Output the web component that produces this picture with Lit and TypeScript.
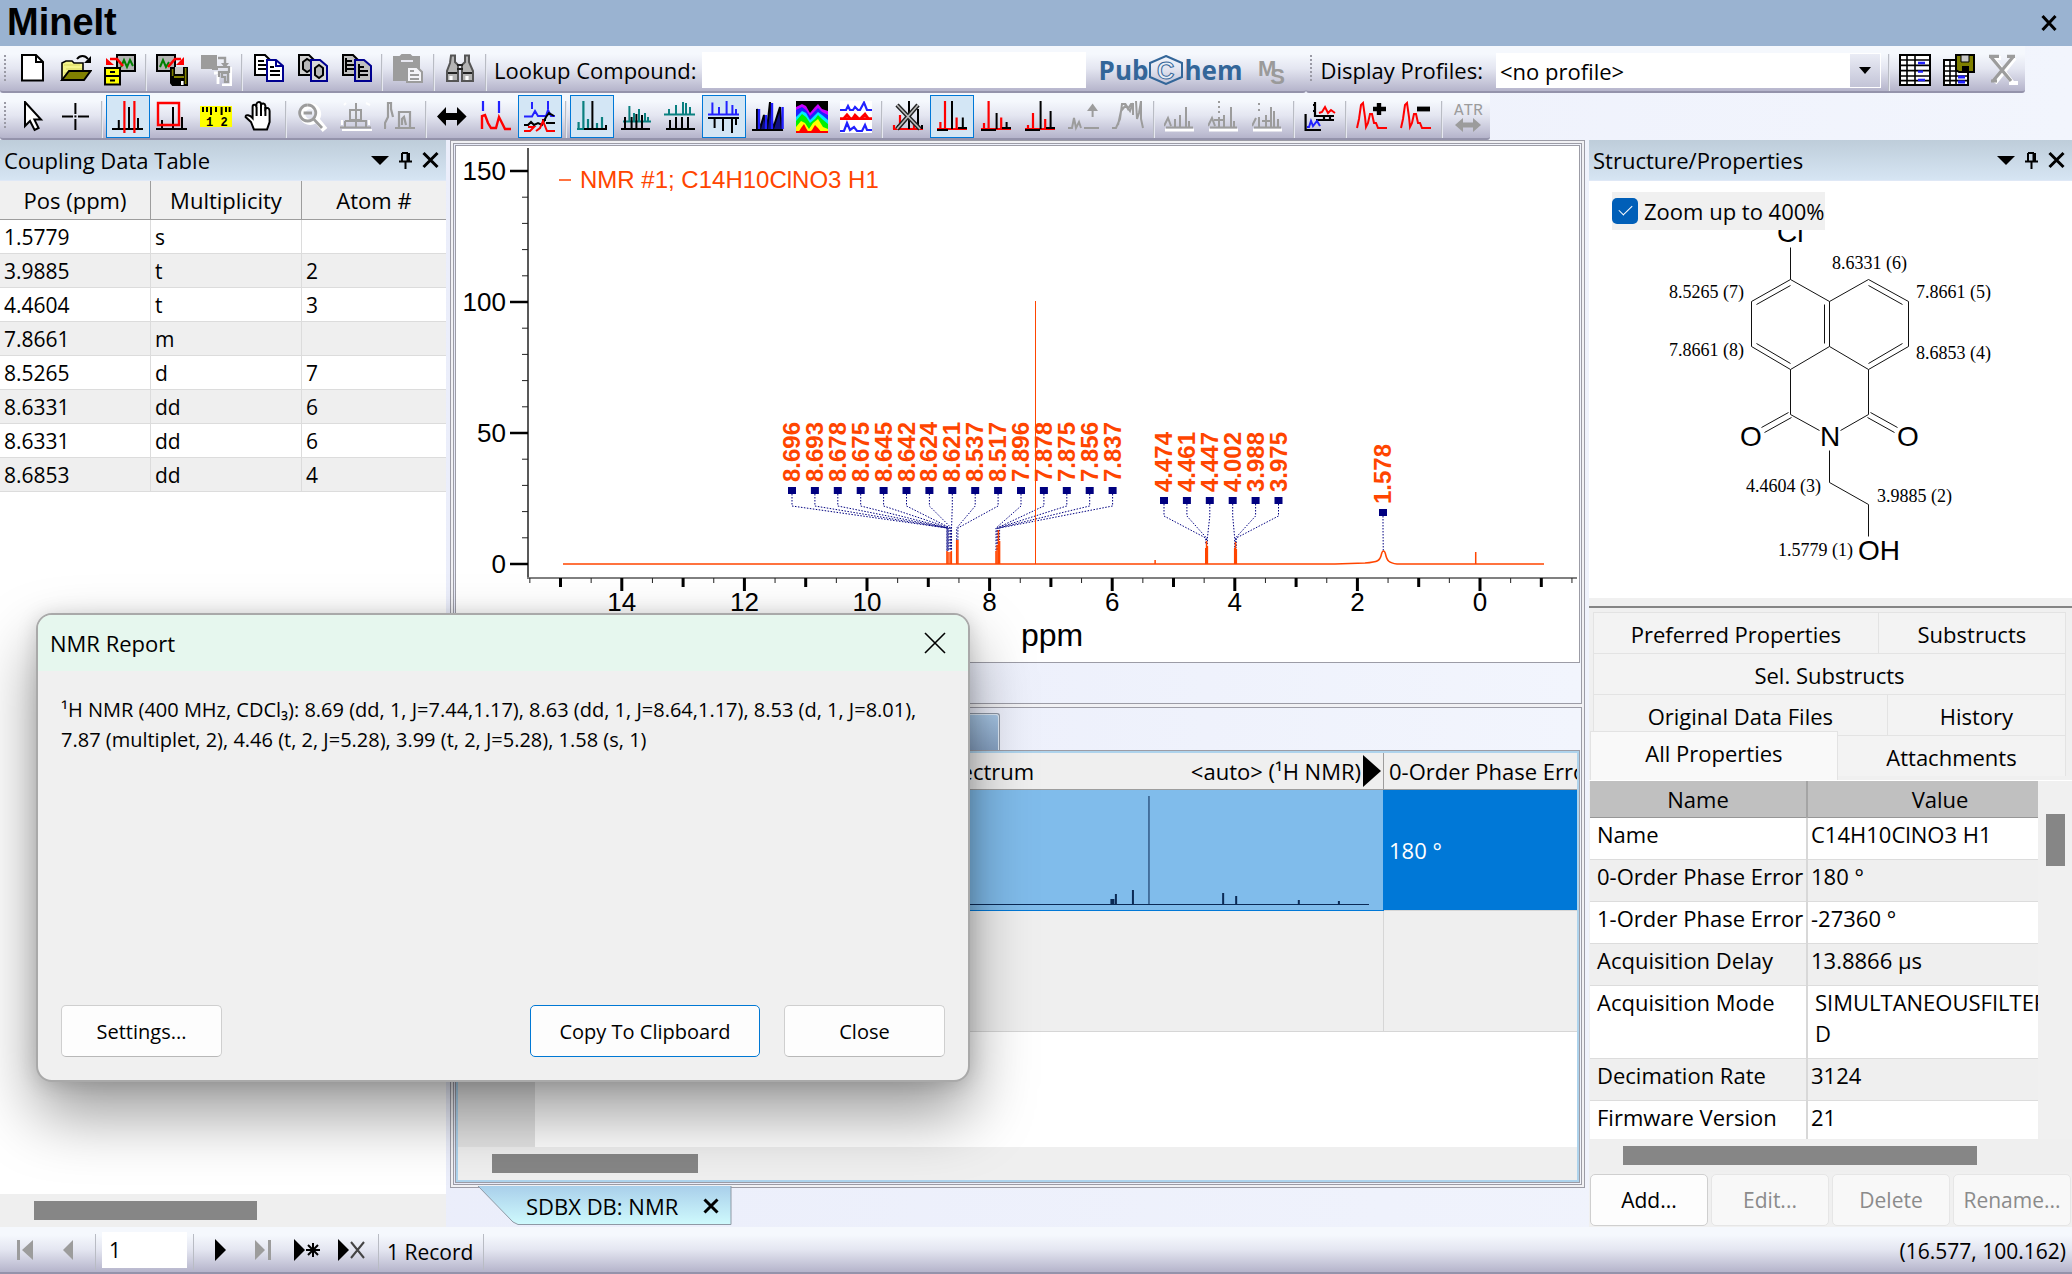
import { LitElement, html, css, svg, nothing } from "lit";
import { customElement } from "lit/decorators.js";
import { classMap } from "lit/directives/class-map.js";

type Part = [d: string, stroke: string, fill?: string, width?: number];

const K = "#000";
const R = "#f00";
const B = "#2222ff";
const T = "#0a8080";
const G = "#9c9c9c";
const W = "#fff";
const N = "none";
const NAVY = "#000090";

const drawParts = (parts: Part[]) =>
  parts.map(([d, s, f, w]) => svg`<path d=${d} stroke=${s} fill=${f ?? N} stroke-width=${w ?? 1}></path>`);

const doc = "M1.5 .5H6.5L9.5 3.5V10.5H1.5Z";
const doc2 = "M7.5 3H12L15.5 6V13.5H7.5Z";
const floppy: Part[] = [
  ["M7.500 7H15.500V15.700H8.500L7.500 14.500Z", K, K],
  ["M8.300 7.500V11M14.800 7V15", "#808000", N, 0.8],
  ["M9.500 6.500H13.500V10H9.500Z", N, "#c8c8c8"],
  ["M9 11.500H14", "#808000", N, 1],
  ["M12.500 13.500H13.800V15.500H12.500Z", N, W],
];
const peaksMinus: Part[] = [
  ["M.5 13.500L1.500 9L2.500 2L3.500 1L4.500 8L5 13L6 11L7 6.500L8 6.500L9 11L10 11L11 13.500H15.500", R, N, 1],
];

const ICONS: Record<string, Part[]> = {
  new: [["M3 .5H10L13.500 4V13.200H3Z", K, W], ["M10 .5V4H13.500", K]],
  open: [
    ["M1 13V4.500L3 3.500H6L7 4.500H11.500V8", K, "#f4f48a", 0.8],
    ["M2 5.500H10M3 7.500H11M2 9.500H4", "#d8d860", N, 0.6],
    ["M1 13L4.500 8.500H15.300L12 13Z", K, "#808000"],
    ["M8.500 2.500C10 .5 12.500 .5 14 2.500", K],
    ["M15.500 1V4.500H12Z", N, K],
  ],
  importDb: [
    ["M6.500 .5H15.500V8.500H6.500Z", K, "#b4b4b4"],
    ["M8.500 6.500L10 3L11.500 6.500L13 3L14.500 6", "#008000"],
    ["M9.500 6L6.500 2.500H3", R, N, 1.3],
    ["M1 2V5.500H5Z", N, R],
    ["M.5 7H8V15.300H.5Z", K, "#ff0"],
    ["M.5 11H8M3 9H5.500M3 13.200H5.500", K],
  ],
  exportDb: [
    ["M.5 .5H9.500V8.500H.5Z", K, "#b4b4b4"],
    ["M2 6.500L3.500 3L5 6.500L6.500 4", "#008000"],
    ["M6 6.500L9.500 2.500H12.500", R, N, 1.3],
    ["M14 1.500V5.500H10Z", N, R],
    ...floppy,
  ],
  exportOff: [
    ["M.5 .5H8.500V7.500H.5Z", N, G],
    ["M9 2H12.500V5", G, N, 1.2],
    ["M10.500 4.500H14.500L12.500 7Z", N, G],
    ["M7 9.500H9M15.500 6.500V15.500H11M9 15V10.500", W, N, 1.4],
    ["M6 7.500H9M8 6.500H14.500V9H9.500V11.500M11 9.500H14V14H12.500V11.500H11Z", G, N, 1.1],
  ],
  copy: [
    [doc, K, W], ["M3 3.500H6M3 5.500H7M3 7.500H7", K],
    [doc2, NAVY, W], ["M12 3V6H15.500", NAVY], ["M9 6.500H11M9 8.500H14M9 10.500H14", K],
  ],
  copyStructure: [
    [doc, K, "#d0d0d0"], ["M3.500 4L5.500 2.500L8 4V7.500L5.500 9L3.500 7.500Z", K, "#b8b8b8"],
    [doc2, NAVY, "#d8d8d8"], ["M9.500 7L11.500 5.500L13.500 7V10.500L11.500 12L9.500 10.500Z", K, "#b8b8b8"],
  ],
  copyRecord: [
    [doc, K, "#c0c0c0"], ["M3 2V9M3 3.500H6M3 5.500H8M3 7.500H8", K],
    [doc2, NAVY, "#c0c0c0"], ["M9.500 5V12M9.500 6.500H12M9.500 8.500H14M9.500 10.500H14", K],
  ],
  paste: [
    ["M1 1.500H4L5 .5H9L10 1.500H13.500V13H1Z", G, G],
    ["M4.500 3.500H10.500", "#e8e8f0"],
    ["M7.500 6.500H12.500L15 9V14H7.500Z", G, "#f4f4f8"],
    ["M9 8.500H11M9 10.500H13.500M9 12.500H13.500", G],
  ],
  find: [
    ["M3.500 .8H5.500V4L7 5.500V13.500H1.500V8.500L3 4.500ZM10.500 .8H12.500V4L14.500 8.500V13.500H9V5.500L10.500 4Z", "#555", "#b4b4b4"],
    ["M6.500 5.500H9.500M6.500 7.500H9.500M2 9.500H6.500M9.500 9.500H14", "#222"],
    ["M3.500 11V13M11.500 11V13", W, N, 1.6],
  ],
  profiles: [
    ["M.5 .5H15.500V15.500H.5Z", K, W],
    ["M.5 3H15.500M.5 5.700H15.500M.5 8.300H15.500M.5 11H15.500M.5 13.300H15.500M4 .5V15.500M8 .5V15.500", K, N, 0.8],
    ["M9.500 4.500H13M9.500 8.800H12M9.500 13H13", B, N, 1.2],
  ],
  saveProfile: [
    ["M.5 3H12.500V15.500H.5Z", K, W],
    ["M.5 6H12M.5 8.500H12M.5 11H12M.5 13.300H12M3.500 3V15.500M6.500 3V15.500", K, N, 0.8],
    ["M7.500 11.500H11M7.500 14H11", B, N, 1.4],
    ["M6.500 .5H15.500V9H8L6.500 8Z", K, "#808000"],
    ["M9 .5H13V4H9Z", K, "#c8c8c8", 0.5],
    ["M9.500 6H13V9H9.500Z", N, K],
  ],
  deleteProfile: [
    ["M3 2L13 14.500M14 2L4 14.500M2 2H7M11 14.500H15.500", W, N, 2],
    ["M2 1.500L12 13.500M13 1.500L3 13.500M1 1.200H6M10 1.200H14M2 13.500H5", G, N, 1.6],
  ],
  pointer: [["M4.500 .5V12.500L7 10L9.300 14.500L11.300 13.500L9.200 9.300H12.500Z", K, W]],
  cross: [["M1 7.700H6.500M9 7.700H14.500M7.700 1V6.500M7.700 9V14.500", K], ["M7.200 7.200H8.200V8.200H7.200Z", N, K]],
  peakLines: [
    ["M0 14H15.500M3.400 14V9.500M8.500 14V3M13 14V8.500", K],
    ["M6.200 0V16M11.200 0V16", R, N, 1.1],
  ],
  zoomBox: [
    ["M0 14H15.500M3 14V9.500M8.500 14V3M13 14V8", K],
    ["M1 1H11.500V12H1Z", R, N, 1.2],
  ],
  ruler: [
    ["M0 2.500H16V13H0Z", N, "#ff0"],
    ["M1.500 3V5.500M3.500 3V5.500M5.500 3V7M8 3V5.500M10.800 3V7M13 3V5.500M14.800 3V5.500", K],
  ],
  hand: [
    ["M5 14.300L3.500 10.500L.8 8C.8 6.500 3 7 4.300 8.500V3C4.300 1.500 6 1.500 6.200 3V1.500C6.700 .2 8.300 .2 8.500 1.500V2C9 .8 10.500 1 10.700 2.500V4C11.500 3 12.800 3.500 12.800 5V10.500L11.500 14.300Z", K, W],
    ["M6.300 3V7.500M8.500 2V7.500M10.700 3V7.500", K],
  ],
  zoomOut: [
    ["M7 2.500a4 4 0 1 0 .1 0M10 9L14.500 14.500", W, N, 3],
    ["M5.800 2a4 4 0 1 0 .1 0M3.800 6H8M9 9.200L13 13.500", G, N, 1.4],
  ],
  zoomPeaks: [
    ["M1 14.500H16M1 9.500V12M14.500 9.500V12M13 1L15 2M2 2L3 1", W],
    ["M0 13.200H15.500M2.500 13V10M5 4.500H10.500V9.500H5ZM8 1V13M2.500 10H13V13", G],
  ],
  zoomRegion: [["M.5 13.500V11L2 8V1H3.500V4L4.500 8M7.500 5.500H13V13.500H7.500ZM9 12V9L10 8L11 12M0 13.500H1M5.500 13.500H15.500", G, N, 1.1]],
  widen: [["M.5 7.800L5 3V6H10.500V3L15.300 7.800L10.500 12.500V9.500H5V12.500Z", N, K]],
  pick: [
    ["M1 14V7.500L2.500 7L4 11L5.500 13.500H8L9.500 8L11.500 12L12.500 14H15.500", R, N, 1.2],
    ["M1.500 0V5M9.500 0V6", B, N, 1.1],
  ],
  picksMulti: [
    ["M0 7.700H4L5.500 5L7 7.500H11L12 4.500L13.500 7.500H15.500M4 .5V4M12 0V4", B],
    ["M0 12H2L3.500 10.500L5 12L7 11L9 12L11 8L12.500 6L15 7.500M9 9.500H11M11 11H15.500", K],
    ["M0 15H3L5 13L2 13M6 15L8 13.500L9.500 10L11.500 15H15.500", R],
  ],
  overlay: [
    ["M.5 14H8M1.300 14V10.500M3.700 14V0M6 14V9M10.500 14V11M13 14V8", T, N, 1.1],
    ["M4 14H15.500M8.200 14V0M15 14V12", K],
  ],
  stagger: [
    ["M1.500 10.300H15.500M4.700 10V2.500M7 10V6M9.500 10V4M12.500 10V6M14 10V8", T],
    ["M.5 14H15M2.500 14V8M5.800 14V8M8.200 14V6.500M11 14V7", K],
  ],
  stack: [
    ["M0 6.700H15.500M2.500 6.500V4M6 6.500V2M9.500 6.500V.5M13 6.500V3M11 6.500V1", T],
    ["M1 14H15.500M3 14V9.500M6 14V8M9 14V8M12 14V8", K],
  ],
  mirror: [
    ["M0 6.700H15.500M2.200 6.500V.8M5.500 6.500V3M9.300 6.500V0M12.200 6.500V2M14 6.500V4", B],
    ["M0 8.500H15.500M3.300 8.500V13.500M7.500 8.500V15M12 8.500V16M14 8.500V12", K],
  ],
  solid: [
    ["M0 14.500H2.500V4L4 14L6 7L7.500 14L9 .5L10.500 14L14 3L15 14.500Z", K, "#101080"],
    ["M3.500 4V14M7 7V14M10 1V14M15.300 3V14", B, N, 1.2],
  ],
  heat: [
    ["M0 0H16V16H0Z", N, K],
    ["M0 16V3L3 1.500L5 2.500L7 6L9.500 3L11 1.500L13 4L16 5V16Z", N, "#c800ff"],
    ["M0 16V4.500L3 3L5 4.500L7 7.500L9.500 5L11 3.500L13 5.500L16 7V16Z", N, "#2020ff"],
    ["M0 16V8L3 5L5 6L7 9.500L9.500 7L11 5.500L13 7L16 9.500V16Z", N, "#00e8ff"],
    ["M0 16V10L3 6.500L5 8L7 11L9.500 9L11 7L13 9L16 11.500V16Z", N, "#00f000"],
    ["M0 16V13L2.500 10L4.500 11L6.500 14L8.500 11L11 9L13.500 13L16 14V16Z", N, "#ff0"],
    ["M1 16L2.500 13.500L4 11.500L5 13.500L6.500 16L8 14.500L9.500 12L11 13.500L13 16Z", N, R],
    ["M0 15.500H16", R],
  ],
  multi: [
    ["M0 0H16V16H0Z", N, W],
    ["M0 4.500H3L4 2.500L5 4.500H6.500L7.500 3L9 4.500H10L12 .8L13.500 4.500H16M0 15H2L3.500 11L5 14.500L7 13L8.500 15H11L12.500 12L13.500 14.500H16", B, N, 1.1],
    ["M0 8.800H16M2 8.500L3.500 6.800L5 8.500M6.500 8.500L7.500 7L9 8.500M10.500 8.500L12.500 6.500L14 8.500", R, N, 1.3],
  ],
  clearPeaks: [
    ["M.5 14H15.500M1 14V12M4 14V7M11 14V11", R, N, 1.1],
    ["M8.500 0V14M13 14V4M15 14V12M3 14V12", K],
    ["M2.500 2L14 14M13 2L2.500 14", "#222", N, 2.2],
    ["M2.500 2L14 14M13 2L2.500 14", "#bbb", N, 0.8],
  ],
  peaksTop: [
    ["M.5 14H15.500M2.200 14V10.500M4.500 14V0M10.300 14V8.300", R, N, 1.1],
    ["M8 14V0M13.400 14V8.300M.5 14.500H6M11 13.500H15.500", K],
  ],
  peaksStep: [
    ["M.5 14H15.500M2 14V11M4.300 14V0M10.600 14V8.300", R, N, 1.1],
    ["M8.300 14V6M13.300 14V10.500M.5 14.500H8M11 13.500H15.500", K],
  ],
  peaksStepBack: [
    ["M.5 14H15.500M4.500 14V6M2 14V12M10.600 14V9", R, N, 1.1],
    ["M8.300 14V0M13.300 14V5M.5 14.500H8M11 13.500H15.500", K],
  ],
  raise: [["M0 13.500H2L3 8.500L4 13.500L5.500 10.500L6.500 13.500M8 13.500H15.500M12.300 8V3", G], ["M12.300 1.200L9.500 5H15Z", N, G]],
  noise: [["M0 13.500H2L4 9L5 1.500H6.500L8 4L9.500 1.500H10.500V7M12 0L12.500 9L13.500 6L14.500 0V9L15.500 13.500M3 12L4.500 5L7 2L9 5L10.500 1", G]],
  greyPeaksA: [["M.5 14.500H15", W, N, 1.5], ["M0 12.500L2 8.500L3.500 12.500M5.500 13V9M8 13V7M11 13V3M12.500 13V10M1 13.200H14.500", G]],
  greyPeaksB: [["M.5 14.500H15", W, N, 1.5], ["M0 12.500L2 8.500L3.500 12.500M5.500 13V8M5.500 6V5M5.500 3.500V2.500M5.500 1V0M8 13V7M11.500 13V3M13 13V10M1 13.200H14.500M3 9.500H8", G]],
  greyPeaksC: [["M.5 14.500H15", W, N, 1.5], ["M0 12.500L2 8.500M3.500 13V8M3.500 5V4M3.500 2V1M7 13V7M9.500 13V3M11 13V5M13 13V9M1 13.200H14.500M5 10H10", G]],
  axes: [
    ["M.8 6.500V14.500H8.500M5.500 .5V7.500H15M6 9.500H15M10 7.500V9.500M13 7.500V9.500M5.500 2H4.500M5.500 5H4.500", K, N, 1.1],
    ["M1.500 13H2.500L3.500 10L4.500 12.500L6.500 10L8 12.500", B],
    ["M7.500 6L9 5.500L10.500 3L12 6L13.500 4.500L15.500 6", R],
  ],
  addPeak: [...peaksMinus, ["M11.500 1V7M8.500 4H15", K, N, 2.2]],
  removePeak: [...peaksMinus, ["M8.500 4H15", K, N, 2.4]],
  atr: [["M1.500 12L5.500 8.500V10.700H10.500V8.500L14.500 12L10.500 15.500V13.300H5.500V15.500Z", N, G]],
};

interface Tool { icon: string; label: string; on?: boolean; off?: boolean }
type ToolItem = Tool | "|";

const FILE_TOOLS: ToolItem[] = [
  { icon: "new", label: "New" },
  { icon: "open", label: "Open" },
  { icon: "importDb", label: "Open database" },
  "|",
  { icon: "exportDb", label: "Save to database" },
  { icon: "exportOff", label: "Update record", off: true },
  "|",
  { icon: "copy", label: "Copy" },
  { icon: "copyStructure", label: "Copy structure" },
  { icon: "copyRecord", label: "Copy record" },
  "|",
  { icon: "paste", label: "Paste", off: true },
  "|",
  { icon: "find", label: "Find" },
  "|",
];

const PROFILE_TOOLS: ToolItem[] = [
  "|",
  { icon: "profiles", label: "Edit profiles" },
  { icon: "saveProfile", label: "Save profile" },
  { icon: "deleteProfile", label: "Delete profile", off: true },
];

const VIEW_TOOLS: ToolItem[] = [
  { icon: "pointer", label: "Select" },
  { icon: "cross", label: "Crosshair" },
  "|",
  { icon: "peakLines", label: "Zoom horizontally", on: true },
  { icon: "zoomBox", label: "Zoom box" },
  { icon: "ruler", label: "Ruler" },
  { icon: "hand", label: "Pan" },
  "|",
  { icon: "zoomOut", label: "Zoom out", off: true },
  { icon: "zoomPeaks", label: "Full view", off: true },
  { icon: "zoomRegion", label: "Zoom region", off: true },
  "|",
  { icon: "widen", label: "Fit width" },
  { icon: "pick", label: "Pick peaks" },
  { icon: "picksMulti", label: "Pick in all", on: true },
  "|",
  { icon: "overlay", label: "Overlay", on: true },
  { icon: "stagger", label: "Stagger" },
  { icon: "stack", label: "Stack" },
  { icon: "mirror", label: "Mirror", on: true },
  { icon: "solid", label: "Solid" },
  { icon: "heat", label: "Heat map" },
  { icon: "multi", label: "Multiple" },
  "|",
  { icon: "clearPeaks", label: "Clear normalization" },
  { icon: "peaksTop", label: "Normalize to top", on: true },
  { icon: "peaksStep", label: "Normalize first" },
  { icon: "peaksStepBack", label: "Normalize second" },
  { icon: "raise", label: "Offset", off: true },
  { icon: "noise", label: "Noise", off: true },
  "|",
  { icon: "greyPeaksA", label: "Baseline", off: true },
  { icon: "greyPeaksB", label: "Baseline point", off: true },
  { icon: "greyPeaksC", label: "Baseline range", off: true },
  "|",
  { icon: "axes", label: "Axes" },
  "|",
  { icon: "addPeak", label: "Add peak" },
  { icon: "removePeak", label: "Remove peak" },
  "|",
  { icon: "atr", label: "ATR", off: true },
];

const COUPLING = [
  ["1.5779", "s", ""],
  ["3.9885", "t", "2"],
  ["4.4604", "t", "3"],
  ["7.8661", "m", ""],
  ["8.5265", "d", "7"],
  ["8.6331", "dd", "6"],
  ["8.6331", "dd", "6"],
  ["8.6853", "dd", "4"],
];

const PROPERTIES: [string, string[]][] = [
  ["Name", ["C14H10ClNO3 H1"]],
  ["0-Order Phase Error", ["180 °"]],
  ["1-Order Phase Error", ["-27360 °"]],
  ["Acquisition Delay", ["13.8866 µs"]],
  ["Acquisition Mode", ["SIMULTANEOUSFILTERE", "D"]],
  ["Decimation Rate", ["3124"]],
  ["Firmware Version", ["21"]],
];

/* Chart scale: one ppm is 61.3 units, fifty intensity units are 131. */
const px = (ppm: number) => 1480 - 61.3 * ppm;
const py = (v: number) => 564 - 2.62 * v;

interface PeakGroup { labels: string[]; x: number; top: number; join: number; ends: number[] }
const GROUPS: PeakGroup[] = [
  {
    labels: ["8.696", "8.693", "8.678", "8.675", "8.645", "8.642", "8.624", "8.621", "8.537", "8.517", "7.896", "7.878", "7.875", "7.856", "7.837"],
    x: 792, top: 487, join: 528,
    ends: [551, 551, 551, 551, 551, 551, 551, 551, 540, 540, 551, 551, 551, 540, 540],
  },
  { labels: ["4.474", "4.461", "4.447", "4.002", "3.988", "3.975"], x: 1164, top: 497, join: 538, ends: [544, 544, 544, 548, 548, 548] },
  { labels: ["1.578"], x: 1383, top: 509, join: 551, ends: [551] },
];

const PEAKS: [number, number][] = [
  [8.696, 551], [8.678, 552], [8.645, 552], [8.624, 551], [8.537, 540], [8.517, 540],
  [7.896, 551], [7.878, 545], [7.856, 530], [7.837, 541], [4.474, 548], [4.461, 541], [4.447, 546],
  [4.002, 548], [3.988, 542], [3.975, 549], [0.07, 552], [5.3, 560],
];

@customElement("tool-strip")
export class ToolStrip extends LitElement {
  static properties = { items: { attribute: false } };
  declare items: ToolItem[];
  static styles = css`
    :host { display: flex; height: 44px; }
    .tool {
      width: 44px; height: 43px; padding: 0; border: 1px solid transparent; background: none;
      display: flex; align-items: center; justify-content: center;
    }
    .tool.on { border-color: #0078d7; background: #d3e6f5; }
    .sep { width: 8px; display: flex; justify-content: center; padding-top: 6px; box-sizing: border-box; }
    .sep::before { content: ""; border-left: 1px solid #b9bcc4; border-right: 1px solid #e6e8f0; height: 37px; }
    .icon { width: 32px; height: 32px; display: block; }
    .atr { font: 8px "Liberation Mono", monospace; }
    .digits { font: 700 6px "Liberation Mono", monospace; white-space: pre; }
  `;
  render() {
    return (this.items ?? []).map((t) =>
      t === "|"
        ? html`<span class="sep"></span>`
        : html`<button class=${classMap({ tool: true, on: !!t.on })} ?disabled=${!!t.off} aria-label=${t.label}>
            <svg class="icon" viewBox="0 0 16 16">
              ${drawParts(ICONS[t.icon])}
              ${t.icon === "atr" ? svg`<text class="atr" x="1" y="7" fill=${G}>ATR</text>` : nothing}
              ${t.icon === "ruler" ? svg`<text class="digits" x="3" y="12.500">1 2</text>` : nothing}
            </svg>
          </button>`
    );
  }
}

@customElement("panel-title")
export class PanelTitle extends LitElement {
  static properties = { heading: {} };
  declare heading: string;
  static styles = css`
    :host {
      display: flex; align-items: center; height: 41px; padding: 0 7px 0 4px; box-sizing: border-box;
      background: linear-gradient(#becdda, #d6e5f3); border-bottom: 1px solid #dfe8f6;
      font: 22px "Open Sans", sans-serif;
    }
    .name { flex: 1; font: inherit; margin: 0; }
    .act { border: 0; padding: 0; background: none; display: flex; margin-left: 9px; }
  `;
  render() {
    return html`
      <h2 class="name">${this.heading}</h2>
      <button class="act" aria-label="Menu"><svg width="18" height="18" viewBox="0 0 18 18"><path d="M0 5H18L9 14Z"></path></svg></button>
      <button class="act" aria-label="Pin">
        <svg width="15" height="18" viewBox="0 0 15 18"><path d="M4 2V10M4 2H10M9.500 2V10M11 2V10M1 10.500H14M7.500 11V18" fill="none" stroke="#000" stroke-width="2"></path></svg>
      </button>
      <button class="act" aria-label="Close">
        <svg width="17" height="18" viewBox="0 0 17 18"><path d="M1.500 2L15.500 16M15.500 2L1.500 16" stroke="#000" stroke-width="3"></path></svg>
      </button>`;
  }
}

@customElement("nmr-chart")
export class NmrChart extends LitElement {
  static styles = css`
    :host { display: block; background: #fff; }
    svg { display: block; width: 100%; height: auto; font-family: "Liberation Sans", Arial, sans-serif; }
    .tick { font-size: 26px; }
    .unit { font-size: 32px; }
    .legend { font-size: 24px; fill: #ff4500; }
    .peak { font-size: 24px; font-weight: 700; fill: #ff4500; }
  `;
  render() {
    const yMinor = Array.from({ length: 16 }, (_, i) => i * 10);
    const xTicks = Array.from({ length: 35 }, (_, i) => 15.5 - i * 0.5);
    return html`<svg viewBox="457 147 1121 515" role="img" aria-label="NMR spectrum">
      <path d="M528 148V578" stroke="#222" stroke-width="1.500"></path>
      <path d="M527 578H1577" stroke="#808080" stroke-width="2"></path>
      ${yMinor.map((v) => v % 50 === 0
        ? svg`<path d="M510 ${py(v)}H528" stroke="#000" stroke-width="2.500"></path><text class="tick" text-anchor="end" x="506" y=${py(v) + 9}>${v}</text>`
        : svg`<path d="M522 ${py(v)}H528" stroke="#222"></path>`)}
      ${xTicks.map((p) => p % 1 !== 0
        ? svg`<path d="M${px(p)} 578V583" stroke="#222"></path>`
        : p % 2 !== 0
          ? svg`<path d="M${px(p)} 578V587" stroke="#000" stroke-width="3"></path>`
          : svg`<path d="M${px(p)} 578V591" stroke="#000" stroke-width="3"></path><text class="tick" text-anchor="middle" x=${px(p)} y="611">${p}</text>`)}
      <text class="unit" text-anchor="middle" x="1052" y="646">ppm</text>
      <path d="M559 180H571" stroke="#ff4500" stroke-width="1.500"></path>
      <text class="legend" x="580" y="188">NMR #1; C14H10ClNO3 H1</text>
      ${GROUPS.map((g) => g.labels.map((l, i) => {
        const x = g.x + i * 22.9;
        const end = px(Number(l));
        return svg`
          <text class="peak" transform="translate(${x + 8} ${g.top - 5}) rotate(-90)">${l}</text>
          <rect x=${x - 4} y=${g.top} width="8" height="7" fill="#000080"></rect>
          <path d="M${x} ${g.top + 7}V${g.top + 19}L${end} ${g.join}V${g.ends[i]}" fill="none" stroke="#000080" stroke-dasharray="1.500 1.500"></path>`;
      }))}
      <g fill="none" stroke="#ff4500" stroke-width="1.500">
        <path d="M563 564H1335L1365 563C1378 562 1380 561 1381.500 554C1382.500 550 1384.500 550 1385.500 554C1387 561 1389 563 1397 564H1544"></path>
        <path d="M1035.500 301V564" stroke-width="1"></path>
        ${PEAKS.map(([p, y]) => svg`<path d="M${px(p)} 564V${y}"></path>`)}
      </g>
    </svg>`;
  }
}

@customElement("molecule-view")
export class MoleculeView extends LitElement {
  static styles = css`
    :host { display: block; position: relative; background: #fff; }
    svg { display: block; width: 100%; height: auto; }
    .bond { fill: none; stroke: #111; }
    .atom { font: 28px "Liberation Sans", Arial, sans-serif; }
    .shift { font: 18px "Liberation Serif", "Times New Roman", serif; }
    .zoom {
      position: absolute; left: 23px; top: 11px; height: 38px; display: flex; align-items: center; gap: 6px;
      background: #f0f0f0; font: 22px "Open Sans", sans-serif;
    }
    .check {
      appearance: none; margin: 0; width: 26px; height: 26px; border-radius: 5px; background: #005fb8;
      display: grid; place-items: center;
    }
    .check:checked::before {
      content: ""; width: 12px; height: 6px; border-left: 1px solid #fff; border-bottom: 1px solid #fff;
      transform: rotate(-45deg); margin-bottom: 5px;
    }
  `;
  render() {
    const shifts: [number, number, string][] = [
      [252, 89, "8.6331 (6)"], [89, 118, "8.5265 (7)"], [336, 118, "7.8661 (5)"], [89, 176, "7.8661 (8)"],
      [336, 179, "8.6853 (4)"], [166, 312, "4.4604 (3)"], [297, 322, "3.9885 (2)"], [198, 376, "1.5779 (1)"],
    ];
    const atoms: [number, number, string][] = [
      [197, 62, "Cl"], [160, 266, "O"], [240, 266, "N"], [317, 266, "O"], [278, 380, "OH"],
    ];
    return html`
      <svg viewBox="9 1 483 417" role="img" aria-label="Structure">
        <path class="bond" transform="translate(-.5 .5)" d="M211 67V99L250 121V166L211 189L172 166V121L211 99M250 121L289 99L329 121V166L289 189L250 166M211 189V234L240 250M289 189V234L261 250
          M177 124L211 105M245 124V163M177 163L211 183M289 105L323 124M289 183L323 163
          M209 232L182 247M212 237L185 252M291 232L318 247M288 237L315 252M250 270V302L289 324V356"></path>
        ${atoms.map(([x, y, t]) => svg`<text class="atom" x=${x} y=${y}>${t}</text>`)}
        ${shifts.map(([x, y, t]) => svg`<text class="shift" x=${x} y=${y}>${t}</text>`)}
      </svg>
      <label class="zoom"><input class="check" type="checkbox" checked />Zoom up to 400%</label>`;
  }
}

@customElement("nmr-report")
export class NmrReport extends LitElement {
  static styles = css`
    :host {
      display: flex; flex-direction: column; box-sizing: border-box; border: 2px solid #a9a9a9; border-radius: 16px;
      overflow: hidden; background: #f0f0f0; box-shadow: 0 32px 64px rgba(0, 0, 0, 0.4), 0 2px 20px rgba(0, 0, 0, 0.15);
      font: 22px "Open Sans", sans-serif;
    }
    .bar { display: flex; align-items: center; height: 56px; padding: 0 22px 0 12px; background: #e6f7ee; }
    .name { flex: 1; margin: 0; font: inherit; }
    .x { border: 0; background: none; padding: 0; display: flex; }
    .text { flex: 1; margin: 0; padding: 24px 16px 24px 23px; font-size: 20px; line-height: 30px; }
    .foot { display: flex; gap: 24px; padding: 0 23px 23px; }
    .btn {
      height: 52px; width: 161px; border: 1px solid #cfcfcf; border-bottom-color: #b8b8b8; border-radius: 5px; background: #fdfdfd;
      font: 20px "Open Sans", sans-serif; padding: 0; color: #000;
    }
    .copy { width: 230px; border-color: #0078d4; margin-left: auto; }
  `;
  render() {
    return html`
      <header class="bar">
        <h2 class="name">NMR Report</h2>
        <button class="x" aria-label="Close"><svg width="22" height="22" viewBox="0 0 22 22"><path d="M1 1L21 21M21 1L1 21" stroke="#000" stroke-width="1.600"></path></svg></button>
      </header>
      <p class="text">¹H NMR (400 MHz, CDCl₃): 8.69 (dd, 1, J=7.44,1.17), 8.63 (dd, 1, J=8.64,1.17), 8.53 (d, 1, J=8.01), 7.87 (multiplet, 2), 4.46 (t, 2, J=5.28), 3.99 (t, 2, J=5.28), 1.58 (s, 1)</p>
      <footer class="foot">
        <button class="btn">Settings...</button>
        <button class="btn copy">Copy To Clipboard</button>
        <button class="btn">Close</button>
      </footer>`;
  }
}

@customElement("app-root")
export class AppRoot extends LitElement {
  static styles = css`
    :host {
      display: flex; flex-direction: column; min-height: 100vh; position: relative; overflow: hidden;
      font: 21px "Open Sans", "Noto Sans", sans-serif; color: #000;
      background: linear-gradient(90deg, #e9ecfa, #f2f5fd);
    }
    .title { display: flex; align-items: center; justify-content: space-between; height: 46px; padding: 0 15px 0 7px; background: #9ab3d1; }
    .brand { margin: 0; font: 700 38px/42px "Liberation Sans", Arial, sans-serif; padding-bottom: 2px; }
    .plain { border: 0; padding: 0; background: none; display: flex; }
    .row { display: flex; height: 47px; }
    .strip {
      display: flex; align-items: flex-start; box-sizing: border-box; padding-top: 2px; border-bottom: 2px solid #9493ab;
      background: linear-gradient(#f5f8fd 0 18%, #e4e6f1 50%, #b5b4cb); border-radius: 0 0 3px 3px;
    }
    .grip { width: 2px; height: 28px; margin: 7px 4px 0; background: repeating-linear-gradient(#9a9aa5 0 2px, transparent 2px 4px); }
    .caption { font-size: 22px; line-height: 44px; padding: 0 0 0 4px; white-space: nowrap; }
    .lookup { width: 384px; height: 36px; margin: 4px 0 0 5px; border: 0; padding: 0 6px; box-sizing: border-box; background: #fff; font: inherit; }
    .logo { display: flex; align-items: center; height: 43px; margin: 0 16px 0 13px; color: #336699; font: 700 26px "Open Sans", sans-serif; }
    .hex { font: 700 24px "Liberation Sans", Arial, sans-serif; }
    .ms { margin: 8px 20px 0 0; overflow: visible; }
    .mst { font: 700 22px "Liberation Sans", Arial, sans-serif; }
    .combo { position: relative; margin: 5px 4px 0 13px; width: 385px; height: 35px; display: flex; }
    .select {
      appearance: none; width: 100%; border: 0; border-radius: 0; padding: 0 4px; background: #fff; color: #000;
      font: 22px "Open Sans", sans-serif;
    }
    .drop { position: absolute; right: 1px; top: 1px; bottom: 1px; width: 30px; display: grid; place-items: center; background: linear-gradient(#eaecf5, #c3c4d7); pointer-events: none; }

    .main { flex: 1; display: grid; grid-template-columns: 446px minmax(0, 1fr) 483px; }
    .dock { display: flex; flex-direction: column; background: #fff; min-width: 0; }
    .coupling { width: 100%; border-collapse: collapse; table-layout: fixed; font-size: 21px; }
    .coupling th { font-weight: 400; font-size: 22px; height: 38px; padding: 0; background: #f0f0f0; border-bottom: 1px solid #9d9d9d; border-right: 1px solid #9d9d9d; }
    .coupling td { height: 31px; padding: 2px 4px 0; line-height: 31px; border-bottom: 1px solid #dcdcdc; border-right: 1px solid #dcdcdc; }
    .coupling th:last-child, .coupling td:last-child { border-right: 0; }
    .coupling tr:nth-child(even) td { background: #efefef; }
    .pos { width: 150px; }
    .mult { width: 150px; }
    .spacer { flex: 1; }
    .track { display: flex; align-items: center; background: #efefef; height: 33px; }
    .thumb { height: 19px; background: #868686; }
    .thumb.left { width: 223px; margin-left: 34px; }
    .thumb.mid { width: 206px; margin-left: 34px; }
    .thumb.right { width: 354px; margin-left: 34px; }

    .center { display: flex; flex-direction: column; padding: 0 4px; min-width: 0; }
    .frame { flex: 1; display: flex; flex-direction: column; gap: 3px; border: 1px solid #9c9ca6; padding: 2px; background: #f1f1f4; }
    .pane { border: 1px solid #9c9ca6; padding: 1px; display: flex; flex-direction: column; background: linear-gradient(90deg, #e9ecfa, #f2f5fd); }
    .pane.chart { padding-bottom: 40px; }
    .pane.grid { flex: 1; }
    .well { border: 1px solid #9c9ca6; padding: 1px 1px 0; background: #fff; }
    .viewtabs { display: flex; align-items: flex-end; height: 41px; padding-left: 329px; }
    .viewtab { width: 216px; height: 37px; box-sizing: border-box; border: 1px solid #8f98a6; border-bottom: 0; border-radius: 3px 3px 0 0; background: linear-gradient(#a9c9e8, #88a3c4); padding: 0; box-shadow: inset -1px 1px #dfeaf6; }
    .sheet { flex: 1; display: flex; flex-direction: column; border: 1px solid #9c9ca6; background: #fff; outline: 2px solid #aed3ec; outline-offset: -3px; padding: 2px; }
    .body { flex: 1; background: linear-gradient(90deg, #e4e4e4 77px, #fff 77px); }
    .records { width: 100%; border-collapse: collapse; table-layout: fixed; font-size: 22px; }
    .records th { font-weight: 400; height: 36px; padding: 0; background: #efefef; border-bottom: 1px solid #9d9d9d; border-right: 1px solid #9d9d9d; text-align: left; white-space: nowrap; overflow: hidden; }
    .records td { height: 120px; padding: 0; background: #efefef; border-bottom: 1px solid #d6d6d6; border-right: 1px solid #d6d6d6; }
    .records th:last-child, .records td:last-child { padding-left: 5px; border-right: 0; }
    .records .picked { background: #0078d7; color: #fff; }
    .records .dither { background: repeating-conic-gradient(#0078d7 0 25%, #fff 0 50%) 0 0 / 2px 2px; border-color: #0078d7; }
    .rowhead { width: 77px; }
    .hidden { width: auto; }
    .spec { width: 448px; }
    .last { width: 188px; }
    .head { display: flex; align-items: center; padding: 0 2px 0 0; }
    .nuc { margin-left: auto; }
    .thumbnail { display: block; width: 100%; height: 120px; }
    .docs { display: flex; height: 39px; padding-left: 27px; align-items: flex-start; }
    .doc { position: relative; display: flex; align-items: center; justify-content: space-between; width: 255px; height: 39px; box-sizing: border-box; padding: 0 13px 0 49px; margin-top: -2px; }
    .docbg { position: absolute; inset: 0; width: 100%; height: 100%; }
    .doc a { position: relative; color: #000; text-decoration: none; font-size: 22px; }
    .doc button { position: relative; }

    .props { flex: 1; display: flex; flex-direction: column; background: #f0f0f0; }
    .splitter { height: 8px; border-bottom: 2px solid #858585; }
    .tabs { padding: 4px 6px 0 4px; }
    .tabrow { display: flex; height: 41px; }
    .tabrow.front { height: 45px; }
    .tab { flex: 1 1 auto; height: 41px; box-sizing: border-box; border: 1px solid #e3e3e3; border-width: 1px 1px 0 0; background: #f3f3f3; font: 22px "Open Sans", sans-serif; padding: 1px 0 0; color: #000; }
    .tab:first-child { border-left-width: 1px; }
    .tab.a { flex: 285 1 0; }
    .tab.b { flex: 187 1 0; }
    .tab.c { flex: 294 1 0; }
    .tab.d { flex: 178 1 0; }
    .tab.sel { flex: 247 1 0; height: 49px; margin: -4px 0 0 -3px; padding-bottom: 8px; background: #f9f9f9; z-index: 1; }
    .tab.e { flex: 228 1 0; }
    .list { display: flex; flex: 1; padding-left: 1px; border-top: 1px solid #fff; }
    .clip { flex: 1; min-width: 0; overflow: hidden; background: #fff; }
    .properties { width: 100%; border-collapse: collapse; table-layout: fixed; font-size: 22px; }
    .properties th { height: 36px; padding: 0; font-weight: 400; background: #c0c0c0; border-bottom: 1px solid #979797; }
    .properties th:first-child { border-right: 2px solid #a4a4a4; }
    .properties th:last-child { padding-left: 34px; }
    .properties td { height: 40px; padding: 1px 0 0 7px; border-bottom: 1px solid #dcdcdc; line-height: 31px; vertical-align: top; white-space: nowrap; overflow: hidden; }
    .properties td:first-child { border-right: 2px solid #d8d8d8; }
    .properties td:last-child { padding-left: 3px; }
    .properties .two { height: 71px; }
    .properties .two:last-child { padding-left: 7px; }
    .properties tr:nth-child(even) td { background: #efefef; }
    .properties tr:last-child td { border-bottom: 0; height: 37px; }
    .pname { width: 216px; }
    .vtrack { width: 34px; padding-top: 33px; display: flex; justify-content: center; box-sizing: border-box; }
    .vthumb { width: 19px; height: 52px; background: #868686; margin-left: 1px; }
    .actions { display: grid; grid-template-columns: repeat(4, minmax(0, 1fr)); gap: 3px; padding: 2px 1px 1px; }
    .btn { height: 52px; padding: 0; border: 1px solid #cfcfcf; border-radius: 5px; background: #fdfdfd; font: 21px "Open Sans", sans-serif; color: #000; }
    .btn:disabled { color: #8b8b8b; background: #f8f8f8; border-color: #e6e6e6; }

    .status { display: flex; align-items: center; height: 47px; box-sizing: border-box; padding: 0 6px 0 3px; border-bottom: 2px solid #9493ab; background: linear-gradient(#f5f8fd 0 18%, #e4e6f1 50%, #b5b4cb); font-size: 21px; }
    .nav { width: 44px; height: 40px; padding: 0; border: 0; background: none; display: grid; place-items: center; }
    .record { width: 85px; height: 36px; box-sizing: border-box; border: 0; margin: 0 2px; padding: 0 7px; font: 21px "Open Sans", sans-serif; background: #fff; }
    .bar { width: 1px; height: 36px; background: #b9bcc4; margin: 4px 4px 0; }
    .coords { margin-left: auto; padding-top: 3px; }
    .count { padding: 4px 6px 0 4px; }
    .report { position: absolute; left: 36px; top: 613px; width: 934px; height: 469px; }
  `;

  render() {
    return html`
      <header class="title">
        <h1 class="brand">MineIt</h1>
        <button class="plain" aria-label="Close window">
          <svg width="16" height="18" viewBox="0 0 16 18"><path d="M1.500 2L14.500 16M14.500 2L1.500 16" stroke="#000" stroke-width="3"></path></svg>
        </button>
      </header>
      <div class="row">
        <div class="strip">
          <span class="grip"></span>
          <tool-strip .items=${FILE_TOOLS}></tool-strip>
          <label class="caption" for="lookup">Lookup Compound:</label>
          <input class="lookup" id="lookup" type="text" />
          <span class="logo">Pub<svg width="36" height="30" viewBox="0 0 36 30"><path d="M18 1L34 8V22L18 29L2 22V8Z" fill="none" stroke="#336699" stroke-width="2"></path><text class="hex" x="9" y="24" fill="#e8eef6" stroke="#336699">C</text></svg>hem</span>
          <svg class="ms" width="28" height="30" viewBox="0 0 28 30">
            <text class="mst" x="0" y="20" fill="#9a9a9a">M<tspan dx="-6" dy="8">S</tspan></text>
          </svg>
        </div>
        <div class="strip">
          <span class="grip"></span>
          <label class="caption" for="profile">Display Profiles:</label>
          <span class="combo">
            <select class="select" id="profile"><option>&lt;no profile&gt;</option></select>
            <span class="drop"><svg width="12" height="8" viewBox="0 0 12 8"><path d="M0 0H12L6 7Z"></path></svg></span>
          </span>
          <tool-strip .items=${PROFILE_TOOLS}></tool-strip>
        </div>
      </div>
      <div class="row">
        <div class="strip"><span class="grip"></span><tool-strip .items=${VIEW_TOOLS}></tool-strip></div>
      </div>

      <main class="main">
        <section class="dock">
          <panel-title heading="Coupling Data Table"></panel-title>
          <table class="coupling">
            <thead><tr><th class="pos">Pos (ppm)</th><th class="mult">Multiplicity</th><th>Atom #</th></tr></thead>
            <tbody>${COUPLING.map((r) => html`<tr>${r.map((c) => html`<td>${c}</td>`)}</tr>`)}</tbody>
          </table>
          <div class="spacer"></div>
          <div class="track"><div class="thumb left"></div></div>
        </section>

        <section class="center">
          <div class="frame">
            <div class="pane chart"><div class="well"><nmr-chart></nmr-chart></div></div>
            <div class="pane grid">
              <div class="viewtabs"><button class="viewtab" aria-label="Records"></button></div>
              <div class="sheet">
                <div class="body">
                  <table class="records">
                    <thead>
                      <tr>
                        <th class="rowhead"></th><th class="hidden"></th>
                        <th class="spec"><div class="head"><span>Spectrum</span><span class="nuc">&lt;auto&gt; (¹H NMR)</span><svg width="20" height="32" viewBox="0 0 20 32"><path d="M2 0L20 16L2 32Z"></path></svg></div></th>
                        <th class="last">0-Order Phase Error</th>
                      </tr>
                    </thead>
                    <tbody>
                      <tr>
                        <td></td><td class="dither"></td>
                        <td class="dither">
                          <svg class="thumbnail" viewBox="936 790 447 120" preserveAspectRatio="none">
                            <path d="M936 904.500H1369M1149.500 796V904" fill="none" stroke="#0b2a55"></path>
                            <path d="M1112 904V899M1114 904V899M1116.500 904V894M1133.500 904V890M1223.500 904V893M1236.500 904V896M1299 904V900M1339 904V901" fill="none" stroke="#0b2a55" stroke-width="2"></path>
                          </svg>
                        </td>
                        <td class="picked">180 °</td>
                      </tr>
                      <tr><td></td><td></td><td></td><td></td></tr>
                    </tbody>
                  </table>
                </div>
                <div class="track"><div class="thumb mid"></div></div>
              </div>
            </div>
          </div>
          <nav class="docs">
            <div class="doc">
              <svg class="docbg" viewBox="0 0 255 39" preserveAspectRatio="none">
                <defs><linearGradient id="dg" x1="0" y1="0" x2="0" y2="1"><stop offset="0" stop-color="#a9cfea"></stop><stop offset="1" stop-color="#cffafd"></stop></linearGradient></defs>
                <path d="M1 0L36 36L41 38.500H254V0" fill="url(#dg)" stroke="#8f99a5"></path>
              </svg>
              <a href="#nmr">SDBX DB: NMR</a>
              <button class="plain" aria-label="Close tab"><svg width="16" height="16" viewBox="0 0 16 16"><path d="M1.500 1.500L14.500 14.500M14.500 1.500L1.500 14.500" stroke="#000" stroke-width="3"></path></svg></button>
            </div>
          </nav>
        </section>

        <section class="dock">
          <panel-title heading="Structure/Properties"></panel-title>
          <molecule-view></molecule-view>
          <div class="props">
            <div class="splitter"></div>
            <div class="tabs">
              <div class="tabrow"><button class="tab a">Preferred Properties</button><button class="tab b">Substructs</button></div>
              <div class="tabrow"><button class="tab">Sel. Substructs</button></div>
              <div class="tabrow"><button class="tab c">Original Data Files</button><button class="tab d">History</button></div>
              <div class="tabrow front"><button class="tab sel">All Properties</button><button class="tab e">Attachments</button></div>
            </div>
            <div class="list">
              <div class="clip">
                <table class="properties">
                  <thead><tr><th class="pname">Name</th><th>Value</th></tr></thead>
                  <tbody>
                    ${PROPERTIES.map(([n, v]) => {
                      const tall = classMap({ two: v.length > 1 });
                      return html`<tr><td class=${tall}>${n}</td><td class=${tall}>${v.map((l) => html`<div>${l}</div>`)}</td></tr>`;
                    })}
                  </tbody>
                </table>
              </div>
              <div class="vtrack"><div class="vthumb"></div></div>
            </div>
            <div class="track"><div class="thumb right"></div></div>
            <div class="actions">
              <button class="btn">Add...</button>
              <button class="btn" disabled>Edit...</button>
              <button class="btn" disabled>Delete</button>
              <button class="btn" disabled>Rename...</button>
            </div>
          </div>
        </section>
      </main>

      <footer class="status">
        ${this.nav("First record", "M6 4H9V24H6ZM22 4V24L11 14Z", true)}
        ${this.nav("Previous record", "M18 4V24L8 14Z", true)}
        <span class="bar"></span>
        <input class="record" aria-label="Record" .value=${"1"} />
        <span class="bar"></span>
        ${this.nav("Next record", "M9 3V25L20 14Z")}
        ${this.nav("Last record", "M5 4V24L15 14ZM18 4H21V24H18Z", true)}
        <button class="nav" aria-label="New record"><svg width="30" height="28" viewBox="0 0 30 28"><path d="M1 3V25L12 14Z"></path><path d="M20 7V21M13 14H27M15 9L25 19M25 9L15 19" stroke="#000" stroke-width="2"></path></svg></button>
        <button class="nav" aria-label="Delete record"><svg width="30" height="28" viewBox="0 0 30 28"><path d="M1 3V25L12 14Z"></path><path d="M14 6L27 22M27 6L14 22" stroke="#444" stroke-width="2"></path></svg></button>
        <span class="bar"></span>
        <span class="count">1 Record</span>
        <span class="bar"></span>
        <span class="coords">(16.577, 100.162)</span>
      </footer>

      <nmr-report class="report" role="dialog"></nmr-report>`;
  }

  private nav(label: string, d: string, off = false) {
    return html`<button class="nav" aria-label=${label} ?disabled=${off}>
      <svg width="28" height="28" viewBox="0 0 28 28"><path d=${d} fill=${off ? "#9c9c9c" : "#000"}></path></svg>
    </button>`;
  }
}
